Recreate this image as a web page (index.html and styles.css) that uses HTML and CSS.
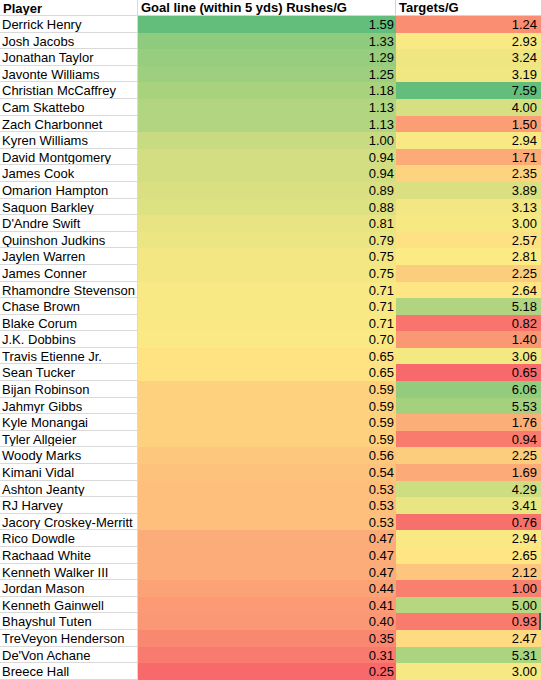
FILE: index.html
```html
<!DOCTYPE html>
<html lang="en">
<head>
    <meta charset="UTF-8">
    <title>Goal line rushes</title>
    <link rel="stylesheet" href="styles.css">
</head>
<body>
    <div class="sheet">
        <div class="row head">
            <div class="cell name">Player</div>
            <div class="cell">Goal line (within 5 yds) Rushes/G</div>
            <div class="cell">Targets/G</div>
        </div>
        <div class="row"><div class="cell name">Derrick Henry</div><div class="cell num gl">1.59</div><div class="cell num tg">1.24</div></div>
        <div class="row"><div class="cell name">Josh Jacobs</div><div class="cell num gl">1.33</div><div class="cell num tg">2.93</div></div>
        <div class="row"><div class="cell name">Jonathan Taylor</div><div class="cell num gl">1.29</div><div class="cell num tg">3.24</div></div>
        <div class="row"><div class="cell name">Javonte Williams</div><div class="cell num gl">1.25</div><div class="cell num tg">3.19</div></div>
        <div class="row"><div class="cell name">Christian McCaffrey</div><div class="cell num gl">1.18</div><div class="cell num tg">7.59</div></div>
        <div class="row"><div class="cell name">Cam Skattebo</div><div class="cell num gl">1.13</div><div class="cell num tg">4.00</div></div>
        <div class="row"><div class="cell name">Zach Charbonnet</div><div class="cell num gl">1.13</div><div class="cell num tg">1.50</div></div>
        <div class="row"><div class="cell name">Kyren Williams</div><div class="cell num gl">1.00</div><div class="cell num tg">2.94</div></div>
        <div class="row"><div class="cell name">David Montgomery</div><div class="cell num gl">0.94</div><div class="cell num tg">1.71</div></div>
        <div class="row"><div class="cell name">James Cook</div><div class="cell num gl">0.94</div><div class="cell num tg">2.35</div></div>
        <div class="row"><div class="cell name">Omarion Hampton</div><div class="cell num gl">0.89</div><div class="cell num tg">3.89</div></div>
        <div class="row"><div class="cell name">Saquon Barkley</div><div class="cell num gl">0.88</div><div class="cell num tg">3.13</div></div>
        <div class="row"><div class="cell name">D'Andre Swift</div><div class="cell num gl">0.81</div><div class="cell num tg">3.00</div></div>
        <div class="row"><div class="cell name">Quinshon Judkins</div><div class="cell num gl">0.79</div><div class="cell num tg">2.57</div></div>
        <div class="row"><div class="cell name">Jaylen Warren</div><div class="cell num gl">0.75</div><div class="cell num tg">2.81</div></div>
        <div class="row"><div class="cell name">James Conner</div><div class="cell num gl">0.75</div><div class="cell num tg">2.25</div></div>
        <div class="row"><div class="cell name">Rhamondre Stevenson</div><div class="cell num gl">0.71</div><div class="cell num tg">2.64</div></div>
        <div class="row"><div class="cell name">Chase Brown</div><div class="cell num gl">0.71</div><div class="cell num tg">5.18</div></div>
        <div class="row"><div class="cell name">Blake Corum</div><div class="cell num gl">0.71</div><div class="cell num tg">0.82</div></div>
        <div class="row"><div class="cell name">J.K. Dobbins</div><div class="cell num gl">0.70</div><div class="cell num tg">1.40</div></div>
        <div class="row"><div class="cell name">Travis Etienne Jr.</div><div class="cell num gl">0.65</div><div class="cell num tg">3.06</div></div>
        <div class="row"><div class="cell name">Sean Tucker</div><div class="cell num gl">0.65</div><div class="cell num tg">0.65</div></div>
        <div class="row"><div class="cell name">Bijan Robinson</div><div class="cell num gl">0.59</div><div class="cell num tg">6.06</div></div>
        <div class="row"><div class="cell name">Jahmyr Gibbs</div><div class="cell num gl">0.59</div><div class="cell num tg">5.53</div></div>
        <div class="row"><div class="cell name">Kyle Monangai</div><div class="cell num gl">0.59</div><div class="cell num tg">1.76</div></div>
        <div class="row"><div class="cell name">Tyler Allgeier</div><div class="cell num gl">0.59</div><div class="cell num tg">0.94</div></div>
        <div class="row"><div class="cell name">Woody Marks</div><div class="cell num gl">0.56</div><div class="cell num tg">2.25</div></div>
        <div class="row"><div class="cell name">Kimani Vidal</div><div class="cell num gl">0.54</div><div class="cell num tg">1.69</div></div>
        <div class="row"><div class="cell name">Ashton Jeanty</div><div class="cell num gl">0.53</div><div class="cell num tg">4.29</div></div>
        <div class="row"><div class="cell name">RJ Harvey</div><div class="cell num gl">0.53</div><div class="cell num tg">3.41</div></div>
        <div class="row"><div class="cell name">Jacory Croskey-Merritt</div><div class="cell num gl">0.53</div><div class="cell num tg">0.76</div></div>
        <div class="row"><div class="cell name">Rico Dowdle</div><div class="cell num gl">0.47</div><div class="cell num tg">2.94</div></div>
        <div class="row"><div class="cell name">Rachaad White</div><div class="cell num gl">0.47</div><div class="cell num tg">2.65</div></div>
        <div class="row"><div class="cell name">Kenneth Walker III</div><div class="cell num gl">0.47</div><div class="cell num tg">2.12</div></div>
        <div class="row"><div class="cell name">Jordan Mason</div><div class="cell num gl">0.44</div><div class="cell num tg">1.00</div></div>
        <div class="row"><div class="cell name">Kenneth Gainwell</div><div class="cell num gl">0.41</div><div class="cell num tg">5.00</div></div>
        <div class="row"><div class="cell name">Bhayshul Tuten</div><div class="cell num gl">0.40</div><div class="cell num tg selected">0.93</div></div>
        <div class="row"><div class="cell name">TreVeyon Henderson</div><div class="cell num gl">0.35</div><div class="cell num tg">2.47</div></div>
        <div class="row"><div class="cell name">De'Von Achane</div><div class="cell num gl">0.31</div><div class="cell num tg">5.31</div></div>
        <div class="row"><div class="cell name">Breece Hall</div><div class="cell num gl">0.25</div><div class="cell num tg">3.00</div></div>
    </div>

    <script>
        // excel style 3-colour scale: red (min) -> yellow (median) -> green (max)
        const RED = [248, 105, 107];
        const YELLOW = [255, 235, 132];
        const GREEN = [99, 190, 123];

        function mix(a, b, t) {
            return a.map((c, i) => Math.round(c + (b[i] - c) * t));
        }

        function paint(selector) {
            const cells = Array.from(document.querySelectorAll(selector));
            const vals = cells.map(c => parseFloat(c.textContent));
            const sorted = vals.slice().sort((a, b) => a - b);
            const n = sorted.length;
            const min = sorted[0];
            const max = sorted[n - 1];
            const mid = n % 2 ? sorted[(n - 1) / 2] : (sorted[n / 2 - 1] + sorted[n / 2]) / 2;

            cells.forEach((cell, i) => {
                const v = vals[i];
                let rgb;
                if (v <= mid) {
                    rgb = mix(RED, YELLOW, (v - min) / (mid - min));
                } else {
                    rgb = mix(YELLOW, GREEN, (v - mid) / (max - mid));
                }
                cell.style.backgroundColor = 'rgb(' + rgb.join(',') + ')';
            });
        }

        paint('.gl');
        paint('.tg');
    </script>
</body>
</html>
```

FILE: styles.css
```css
* {
    margin: 0;
    padding: 0;
    box-sizing: border-box;
}

body {
    background-color: #fff;
    font-family: 'Liberation Sans', Arial, sans-serif;
    font-size: 13px;
    color: #000;
}

.sheet {
    width: 541px;
    height: 680px;
    display: flex;
    flex-direction: column;
    overflow: hidden;
}

.row {
    display: grid;
    grid-template-columns: 138px 258px 145px;
    height: 16.6px;
    flex: none;
}

.row.head {
    height: 16px;
    font-weight: bold;
}

.cell {
    line-height: 16px;
    padding: 0 2px;
    white-space: nowrap;
    overflow: hidden;
}

.head .cell {
    line-height: 15px;
    border-bottom: 1px solid #d4d4d4;
    border-right: 1px solid #d4d4d4;
    padding-left: 3px;
}

.head .cell:last-child {
    border-right: none;
}

.cell.name {
    border-bottom: 1px solid #d9d9d9;
    border-right: 1px solid #d9d9d9;
    padding-top: 1px;
}

.cell.num {
    text-align: right;
    padding-top: 1px;
    padding-right: 2px;
}

.cell.tg {
    padding-right: 4px;
}

.cell.selected {
    box-shadow: inset -2px 0 0 #1e7145;
}
```
